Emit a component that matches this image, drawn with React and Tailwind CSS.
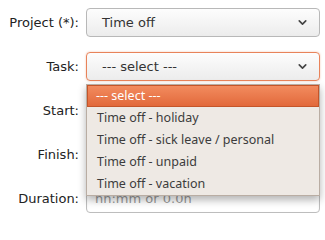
import { ChevronDown } from "lucide-react";

const options = [
    "Time off - holiday",
    "Time off - sick leave / personal",
    "Time off - unpaid",
    "Time off - vacation",
];

function Row({ label, children }) {
    return (
        <div className="flex items-center h-[29px]">
            <label className="w-[80px] pr-[1px] text-right text-[13px] text-[#222]">{label}</label>
            <div className="ml-[6px] w-[234px] h-full">{children}</div>
        </div>
    );
}

function FakeSelect({ value, active }) {
    return (
        <div
            className={
                active
                    ? "flex items-center h-full rounded-[4px] border border-[#e8835a] bg-gradient-to-b from-[#fdfdfd] to-[#ececec] pl-[15px] pr-[10px] shadow-[0_0_2px_rgba(232,131,90,0.5)]"
                    : "flex items-center h-full rounded-[4px] border border-[#b8b8b8] bg-gradient-to-b from-[#fdfdfd] to-[#ececec] pl-[15px] pr-[10px]"
            }
        >
            <span className="flex-1 text-[13px] text-[#333]">{value}</span>
            <ChevronDown size={13} strokeWidth={3} className="text-[#444]" />
        </div>
    );
}

function TextInput({ placeholder }) {
    return (
        <div className="flex items-center h-full rounded-[4px] border border-[#bdbdbd] bg-white pl-[8px] shadow-[inset_0_1px_2px_rgba(0,0,0,0.08)]">
            <span className="text-[13px] text-[#9a9a9a]">{placeholder}</span>
        </div>
    );
}

export default function App() {
    return (
        <div className="relative w-[325px] h-[217px] bg-white overflow-hidden font-['DejaVu_Sans',sans-serif]">
            <div className="flex flex-col gap-[15px] pt-[8px]">
                <Row label="Project (*):">
                    <FakeSelect value="Time off" />
                </Row>
                <Row label="Task:">
                    <FakeSelect value="--- select ---" active />
                </Row>
                <Row label="Start:">
                    <TextInput placeholder="" />
                </Row>
                <Row label="Finish:">
                    <TextInput placeholder="" />
                </Row>
                <Row label="Duration:">
                    <TextInput placeholder="hh:mm or 0.0h" />
                </Row>
            </div>

            {/* open dropdown list */}
            <div className="absolute left-[86px] top-[84px] w-[234px] border border-[#b9ada3] bg-[#eee9e4] shadow-[0_4px_8px_rgba(0,0,0,0.3)] font-['Noto_Sans',sans-serif] text-[12.5px]">
                <div className="h-[22px] flex items-center pl-[8px] text-white bg-gradient-to-b from-[#f28b5e] to-[#e2693b] border border-[#c4552a]">
                    --- select ---
                </div>
                {options.map((o) => (
                    <div key={o} className="h-[22px] flex items-center pl-[10px] text-[#3c3c3c]">
                        {o}
                    </div>
                ))}
            </div>
        </div>
    );
}
